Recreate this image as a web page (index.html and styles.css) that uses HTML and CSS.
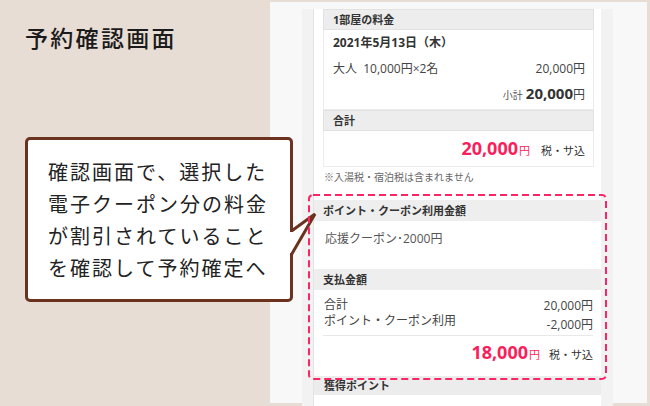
FILE: index.html
```html
<!DOCTYPE html>
<html lang="ja">
<head>
    <meta charset="UTF-8">
    <meta name="viewport" content="width=device-width, initial-scale=1.0">
    <title>予約確認画面</title>
    <link rel="stylesheet" href="styles.css">
</head>
<body>
    <div class="page">
        <section class="intro">
            <h1 class="title">予約確認画面</h1>
            <div class="bubble">
                <p>確認画面で、選択した<br>電子クーポン分の料金<br>が割引されていること<br>を確認して予約確定へ</p>
                <svg class="tail" width="34" height="52" viewBox="0 0 34 52">
                    <polygon points="2,25 6,25 28,7 6,46 2,46" fill="#fff"/>
                    <polyline points="4.5,24 28,7 4.5,47.5" fill="none" stroke="#6b321f" stroke-width="3" stroke-linejoin="miter"/>
                </svg>
            </div>
        </section>

        <section class="shot">
            <div class="frame">
                <div class="col">
                    <div class="card">
                        <div class="card-head">1部屋の料金</div>
                        <div class="card-body">
                            <div class="date">2021年5月13日（木）</div>
                            <div class="line">
                                <span>大人&nbsp; 10,000円×2名</span>
                                <span>20,000円</span>
                            </div>
                            <div class="subtotal">
                                <span class="sub-label">小計</span>
                                <span class="sub-num">20,000</span><span>円</span>
                            </div>
                        </div>
                        <div class="card-head">合計</div>
                        <div class="card-body">
                            <div class="total total-top">
                                <span class="big">20,000</span><span class="yen">円</span>
                                <span class="tax">税・サ込</span>
                            </div>
                        </div>
                    </div>
                    <p class="note">※入湯税・宿泊税は含まれません</p>

                    <div class="hl">
                        <div class="hl-head">ポイント・クーポン利用金額</div>
                        <div class="hl-body coupon">応援クーポン･2000円</div>
                        <div class="hl-head">支払金額</div>
                        <div class="hl-body pay">
                            <div class="pay-lines">
                                <div class="pay-labels">
                                    <div>合計</div>
                                    <div>ポイント・クーポン利用</div>
                                </div>
                                <div class="pay-nums">
                                    <div>20,000円</div>
                                    <div>-2,000円</div>
                                </div>
                            </div>
                            <div class="total total-pay">
                                <span class="big">18,000</span><span class="yen">円</span>
                                <span class="tax">税・サ込</span>
                            </div>
                        </div>
                        <svg class="dash" width="299" height="186" viewBox="0 0 299 186">
                            <rect x="1" y="1" width="297" height="184" rx="4" fill="none" stroke="#fc2565" stroke-width="2" stroke-dasharray="7 4"/>
                        </svg>
                    </div>
                    <div class="hl-head points">獲得ポイント</div>
                </div>
            </div>
        </section>
    </div>
</body>
</html>
```

FILE: styles.css
```css
body {
    margin: 0;
    background: #e8ddd4;
    font-family: "Noto Sans CJK JP", sans-serif;
    color: #222;
}

.page {
    display: flex;
    width: 650px;
    height: 406px;
    overflow: hidden;
}

/* left side */
.intro {
    width: 270px;
    padding: 25px 0 0 25px;
    box-sizing: border-box;
}

.title {
    margin: 0;
    font-size: 23px;
    line-height: 24px;
    font-weight: 500;
    letter-spacing: 2.3px;
    color: #1b1b1b;
}

.bubble {
    position: relative;
    margin-top: 88px;
    width: 268px;
    height: 165px;
    box-sizing: border-box;
    background: #fff;
    border: 3px solid #6b321f;
    border-radius: 5px;
    padding: 16px 0 0 20px;
    z-index: 2;
}

.bubble p {
    margin: 0;
    font-size: 20px;
    line-height: 32px;
    letter-spacing: 2px;
    color: #222;
    white-space: nowrap;
}

.tail {
    position: absolute;
    left: 259px;
    top: 67px;
}

/* screenshot */
.shot {
    width: 377px;
    height: 401px;
    margin-top: 2px;
    background: #f8f8f8;
    padding: 0 34px 0 32px;
    box-sizing: border-box;
    font-family: "Open Sans", "Noto Sans CJK JP", sans-serif;
    color: #444;
    font-size: 12px;
}

.frame {
    height: 100%;
    background: #f2f2f2;
    padding: 0 12px 0 11px;
}

.col {
    height: 100%;
    background: #fff;
    border-left: 1px solid #e4e4e4;
}

.card {
    margin: 7px 7px 0 9px;
}

.card-head {
    height: 21px;
    box-sizing: border-box;
    background: #ededed;
    border: 1px solid #e2e2e2;
    padding-left: 9px;
    font-size: 11px;
    font-weight: bold;
    line-height: 19px;
    color: #333;
}

.card-body {
    border: 1px solid #ececec;
    border-top: none;
    padding: 0 8px 0 9px;
}

.date {
    height: 26px;
    padding-top: 3px;
    line-height: 20px;
    box-sizing: border-box;
    font-weight: bold;
    color: #333;
}

.line {
    display: flex;
    justify-content: space-between;
    height: 26px;
    line-height: 26px;
}

.subtotal {
    display: flex;
    justify-content: flex-end;
    align-items: baseline;
    height: 23px;
    line-height: 23px;
    padding-bottom: 4px;
}

.sub-label {
    font-size: 10px;
    color: #555;
    margin-right: 3px;
}

.sub-num {
    font-size: 15px;
    font-weight: bold;
    color: #333;
}

.total {
    display: flex;
    justify-content: flex-end;
    align-items: baseline;
}

.total-top {
    height: 35px;
    line-height: 35px;
}

.big {
    font-size: 18px;
    font-weight: bold;
    color: #fa1f5c;
}

.yen {
    font-size: 11px;
    color: #fa1f5c;
    margin-left: 1px;
}

.tax {
    font-size: 11px;
    color: #333;
    margin-left: 11px;
}

.note {
    margin: 3px 0 0 10px;
    font-size: 10px;
    line-height: 14px;
    color: #666;
}

/* highlighted part */
.hl {
    position: relative;
    margin-top: 16px;
}

.hl-head {
    height: 21px;
    background: #eeeeee;
    padding-left: 9px;
    font-size: 11px;
    font-weight: bold;
    line-height: 21px;
    color: #333;
}

.hl-body {
    padding: 0 8px 0 10px;
}

.coupon {
    height: 48px;
    box-sizing: border-box;
    padding-top: 8px;
    line-height: 20px;
    color: #555;
    padding-left: 11px;
}

.pay {
    height: 86px;
    box-sizing: border-box;
    padding-top: 6px;
}

.pay-lines {
    display: flex;
    justify-content: space-between;
    height: 39px;
    border-bottom: 1px solid #e8e8e8;
    margin-left: -1px;
    padding-left: 1px;
}

.pay-labels {
    padding-top: 1px;
    line-height: 16px;
}

.pay-nums {
    text-align: right;
    line-height: 19px;
}

.total-pay {
    height: 33px;
    line-height: 33px;
}

.total-pay .tax {
    margin-left: 9px;
}

.dash {
    position: absolute;
    left: -6px;
    top: -6px;
    z-index: 3;
}

.points {
    height: 19px;
    line-height: 19px;
    padding-left: 10px;
    background: #ececec;
}
```
